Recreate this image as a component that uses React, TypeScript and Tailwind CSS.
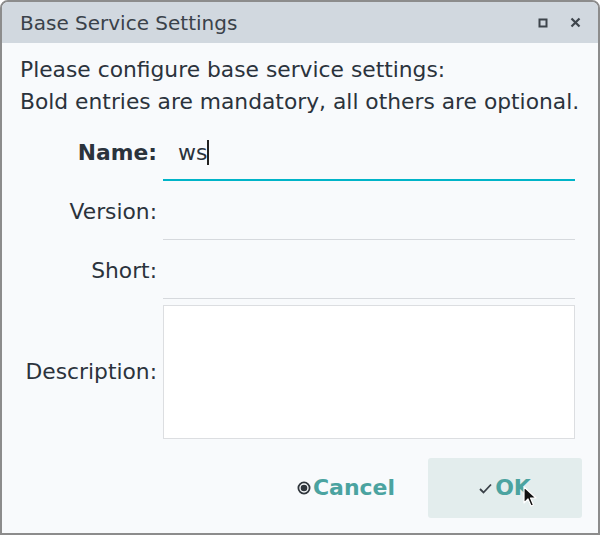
import React from "react";

const font = { fontFamily: '"DejaVu Sans", "Noto Sans", sans-serif' };

function Row({ label, bold, children, active }: { label: string; bold?: boolean; children?: React.ReactNode; active?: boolean }) {
  return (
    <div className="flex items-center">
      <div className={`w-[137px] text-right ${bold ? "font-bold" : ""}`}>{label}</div>
      <div
        className={`ml-[6px] w-[412px] h-[55px] flex items-center pl-[15px] ${
          active ? "border-b-2 border-[#00b4c8]" : "border-b border-[#d6d9dd]"
        }`}
      >
        {children}
      </div>
    </div>
  );
}

export default function App() {
  return (
    <div
      className="relative w-[600px] h-[535px] flex flex-col bg-[#f8fafc] border-2 border-[#8c8c8c] rounded-t-[8px] overflow-hidden text-[#2b333c]"
      style={font}
    >
      <div className="h-[41px] bg-[#d1d8df] flex items-center pl-[18px] pr-[16px] shrink-0">
        <div className="text-[20px] text-[#3a424a] flex-1">Base Service Settings</div>
        <svg width="10" height="10" viewBox="0 0 10 10" className="mr-[22px]">
          <rect x="1.5" y="1.5" width="7" height="7" fill="none" stroke="#3e454c" strokeWidth="2" />
        </svg>
        <svg width="11" height="11" viewBox="0 0 11 11" className="mr-[1px]">
          <path d="M1.5 1.5 L9.5 9.5 M9.5 1.5 L1.5 9.5" stroke="#3e454c" strokeWidth="2.2" />
        </svg>
      </div>
      <div className="flex-1 flex flex-col pl-[18px] text-[21.8px]">
        <div className="mt-[11px] leading-[32px]">
          <div>Please configure base service settings:</div>
          <div>Bold entries are mandatory, all others are optional.</div>
        </div>
        <div className="mt-[8px] flex flex-col gap-[4px]">
          <Row label="Name:" bold active>
            <span className="text-[22px]">ws</span>
            <span className="inline-block w-[2px] h-[25px] bg-[#222] ml-[0px]" />
          </Row>
          <Row label="Version:" />
          <Row label="Short:" />
          <div className="flex items-center mt-[2px]">
            <div className="w-[137px] text-right">Description:</div>
            <div className="ml-[6px] w-[412px] h-[134px] bg-white border border-[#dcdee1]" />
          </div>
        </div>
        <div className="mt-[19px] flex justify-end pr-[16px] gap-[5px]">
          <div className="w-[154px] h-[60px] flex items-center justify-center font-bold text-[#4ba3a0] text-[22px] pb-[2px]">
            <svg width="14" height="14" viewBox="0 0 14 14" className="mr-[2px] mt-[2px]">
              <circle cx="7" cy="7" r="5.6" fill="none" stroke="#30363c" strokeWidth="1.8" />
              <circle cx="7" cy="7" r="3.3" fill="#30363c" />
            </svg>
            Cancel
          </div>
          <div className="w-[154px] h-[60px] flex items-center justify-center bg-[#e3eded] rounded-[3px] font-bold text-[#4ba3a0] text-[22px] pb-[2px]">
            <svg width="13" height="11" viewBox="0 0 13 11" className="mr-[3px] mt-[3px]">
              <path d="M1 6 L4.5 9.5 L12 1.5" fill="none" stroke="#3a4148" strokeWidth="1.8" />
            </svg>
            OK
          </div>
        </div>
      </div>
      <svg width="14" height="22" viewBox="0 0 14 22" className="absolute left-[521px] top-[484px]">
        <path d="M1 1 L1 17 L5 13 L8 20 L10.5 19 L7.5 12 L13 12 Z" fill="#111" stroke="#fff" strokeWidth="1.2" strokeLinejoin="round" />
      </svg>
    </div>
  );
}
